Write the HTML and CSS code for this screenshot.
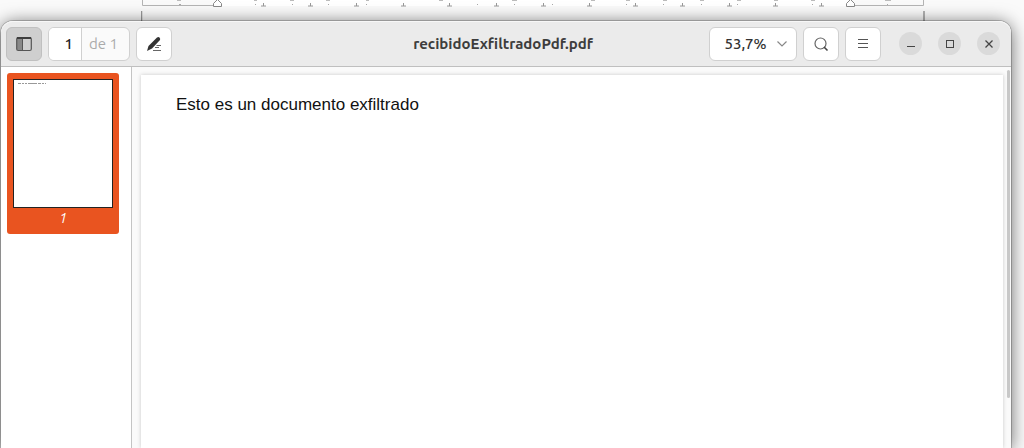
FILE: index.html
```html
<!DOCTYPE html>
<html lang="es">
<head>
    <meta charset="UTF-8">
    <title>recibidoExfiltradoPdf.pdf</title>
    <link rel="stylesheet" href="styles.css">
</head>
<body>
    <div class="backdrop" aria-hidden="true">
        <svg class="ruler" width="784" height="21" viewBox="0 0 784 21">
            <rect x="76" width="633" height="6" fill="#fff"/>
            <path d="M1.500 0v5.500H72M713 5.500h69.500V0" fill="none" stroke="#b4b4b4"/>
            <path d="M.5 11v10M783 11v10" stroke="#999" stroke-width="1.500"/>
            <path d="M120 6h5M167 6h5M213 6h5M260 6h5M306 6h5M353 6h5M400 6h5M446 6h5M492 6h5M539 6h5M586 6h5M632 6h5M678 6h5" stroke="#999"/>
            <path d="M122.500 3v3M169.500 3v3M215.500 3v3M262.500 3v3M308.500 3v3M355.500 3v3M402.500 3v3M448.500 3v3M494.500 3v3M541.500 3v3M588.500 3v3M634.500 3v3M680.500 3v3" stroke="#999"/>
            <path d="M36 .5h4M113 .5h3M149 .5h4M185 .5h4M225 .5h3M298 .5h4M371 .5h5M450 .5h4M485 .5h4M522 .5h4M559 .5h4M596 .5h4M633 .5h4M670 .5h4M744 .5h6" stroke="#bbb"/>
            <path d="M38 4.500h2M114 4.500h1M151 4.500h1M187 4.500h1M225 4.500h1M336 4.500h1M373 4.500h1M411 4.500h1M485 4.500h1M522 4.500h1M560 4.500h1M596 4.500h1M671 4.500h1M746 4.500h1" stroke="#aaa"/>
            <path d="M72.500 6.500v-3l4-4 4 4v3zM705.500 6.500v-3l4-4 4 4v3z" fill="#fff" stroke="#888"/>
        </svg>
    </div>
    <main class="window">
        <header class="toolbar">
            <div class="group">
                <button class="btn square active" aria-label="Panel lateral">
                    <svg width="16" height="16" viewBox="0 0 16 16">
                        <rect x="1" y="2" width="6" height="12" fill="#888"/>
                        <rect x=".7" y="1.500" width="14.600" height="13" rx="1.500" fill="none" stroke="#555" stroke-width="1.200"/>
                        <path d="M1 2h14" stroke="#3d3d3d" stroke-width="2"/>
                        <path d="M6.500 3v11" stroke="#555"/>
                    </svg>
                </button>
                <div class="pager">
                    <input class="page-number" type="text" value="1" aria-label="Página">
                    <span class="page-total">de 1</span>
                </div>
                <button class="btn square" aria-label="Anotar">
                    <svg width="16" height="16" viewBox="0 0 16 16">
                        <path d="M11 1.500q1.500-1 2.500 0t.5 2.500L6 12.500 1 15l1.500-5z" fill="#333"/>
                        <path d="M10.500 9.500H15M9 11.500h4M7 14.500h8" stroke="#666"/>
                    </svg>
                </button>
            </div>
            <h1 class="title">recibidoExfiltradoPdf.pdf</h1>
            <div class="group end">
                <button class="btn zoom">
                    53,7%
                    <svg width="12" height="8" viewBox="0 0 12 8"><path d="M1.500 1.500L6 6l4.500-4.500" fill="none" stroke="#888" stroke-width="1.200"/></svg>
                </button>
                <button class="btn square" aria-label="Buscar">
                    <svg width="16" height="16" viewBox="0 0 16 16"><circle cx="7.500" cy="7.500" r="5.500" fill="none" stroke="#666" stroke-width="1.200"/><path d="M11 11l3.500 3.500" stroke="#444" stroke-width="1.600"/></svg>
                </button>
                <button class="btn square" aria-label="Menú">
                    <svg width="16" height="16" viewBox="0 0 16 16"><path d="M3 3.500h10M3 7.500h10M3 11.500h10" stroke="#555"/></svg>
                </button>
                <div class="controls">
                    <button class="round" aria-label="Minimizar">
                        <svg width="10" height="10" viewBox="0 0 10 10"><path d="M1 7.500h8" stroke="#444"/></svg>
                    </button>
                    <button class="round" aria-label="Maximizar">
                        <svg width="10" height="10" viewBox="0 0 10 10"><rect x="1.500" y="1.500" width="7" height="7" fill="none" stroke="#444"/></svg>
                    </button>
                    <button class="round" aria-label="Cerrar">
                        <svg width="10" height="10" viewBox="0 0 10 10"><path d="M1.500 1.500l7 7M8.500 1.500l-7 7" stroke="#444" stroke-width="1.300"/></svg>
                    </button>
                </div>
            </div>
        </header>
        <div class="content">
            <nav class="sidebar">
                <a class="thumb" href="#page1">
                    <svg class="thumb-page" viewBox="0 0 98 127" aria-hidden="true">
                        <path d="M4 3.500h28" stroke="#999" stroke-dasharray="3 1 2 1 2 1 9 1"/>
                    </svg>
                    <span class="thumb-label">1</span>
                </a>
            </nav>
            <section class="viewer">
                <article class="page" id="page1">
                    <p>Esto es un documento exfiltrado</p>
                </article>
                <div class="scrollbar"></div>
            </section>
        </div>
    </main>
</body>
</html>
```
FILE: styles.css
```css
*{
    padding: 0;
    margin: 0;
    box-sizing: border-box;
}
body{
    display: flex;
    flex-direction: column;
    height: 100vh;
    overflow: hidden;
    background: #fafafa;
    font-family: Ubuntu, "Noto Sans", "Open Sans", sans-serif;
    color: #3d3d3d;
}
button{
    font: inherit;
    color: inherit;
    border: none;
}
svg{
    display: block;
}
.backdrop{
    height: 21px;
    padding-left: 141px;
}
.window{
    flex: 1;
    display: flex;
    flex-direction: column;
    min-height: 0;
    margin: 0 13px 0 1px;
    background: #fafafa;
    border-radius: 12px 12px 0 0;
    box-shadow: 0 0 0 1px rgba(0, 0, 0, 0.2), 0 2px 18px rgba(0, 0, 0, 0.6);
}
.toolbar{
    display: grid;
    grid-template-columns: 1fr auto 1fr;
    align-items: center;
    height: 46px;
    padding: 0 11px 0 5px;
    background: #ebebeb;
    border-bottom: 1px solid #bfbfbf;
    border-radius: 12px 12px 0 0;
    box-shadow: inset 0 1px #f7f7f7;
}
.group{
    display: flex;
    align-items: center;
    gap: 6px;
}
.end{
    justify-content: flex-end;
}
.btn{
    display: flex;
    align-items: center;
    justify-content: center;
    height: 34px;
    background: #fff;
    border: 1px solid #d0d0d0;
    border-radius: 6px;
}
.square{
    width: 36px;
}
.active{
    background: #cfcfcf;
    border-color: #c0c0c0;
}
.pager{
    display: flex;
    width: 82px;
    height: 34px;
    border: 1px solid #d0d0d0;
    border-radius: 6px;
    background: #fafafa;
    font-size: 15px;
    overflow: hidden;
}
.page-number{
    width: 33px;
    padding-right: 8px;
    border: none;
    border-right: 1px solid #d0d0d0;
    background: #fff;
    color: #222;
    font: inherit;
    font-weight: 500;
    text-align: right;
}
.page-total{
    flex: 1;
    padding-right: 4px;
    color: #aaa;
    line-height: 32px;
    text-align: center;
}
.title{
    font-size: 15px;
    line-height: 20px;
    text-align: center;
}
.zoom{
    width: 88px;
    gap: 9px;
    padding-left: 6px;
    font-size: 15px;
    font-weight: 500;
    color: #333;
}
.controls{
    display: flex;
    gap: 16px;
    padding-left: 12px;
}
.round{
    display: flex;
    align-items: center;
    justify-content: center;
    width: 23px;
    height: 23px;
    border-radius: 50%;
    background: #dadada;
}
.content{
    flex: 1;
    display: flex;
    min-height: 0;
}
.sidebar{
    width: 131px;
    padding: 6px;
    background: #fff;
    border-right: 1px solid #c4c4c4;
}
.thumb{
    display: block;
    width: 112px;
    padding: 6px 6px 5px;
    border-radius: 3px;
    background: #e95420;
    color: #fff;
    text-decoration: none;
}
.thumb-page{
    width: 100%;
    background: #fff;
    border: 1px solid #222;
}
.thumb-label{
    display: block;
    padding-bottom: 1px;
    font-size: 14px;
    font-style: italic;
    line-height: 20px;
    text-align: center;
}
.viewer{
    flex: 1;
    display: flex;
    padding: 8px 0 0 9px;
    overflow: hidden;
}
.page{
    flex: 1;
    padding: 20px 35px;
    background: #fff;
    box-shadow: 0 0 4px rgba(0, 0, 0, 0.2);
    font: 17px/20px "Liberation Sans", Arial, sans-serif;
    color: #111;
}
.scrollbar{
    width: 3px;
    height: 328px;
    margin: -5px 1px 0 4px;
    border-radius: 2px;
    background: #c8c8c8;
}
```
